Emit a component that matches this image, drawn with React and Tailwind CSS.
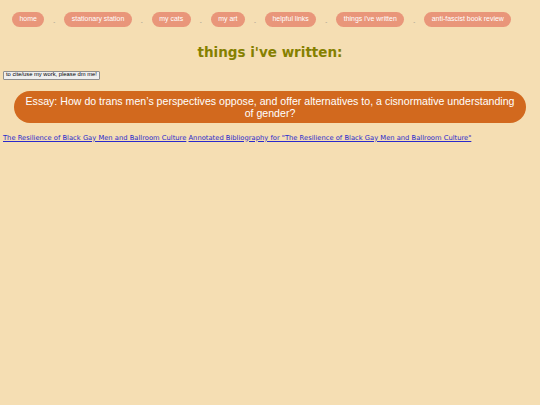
const navItems = [
  "home",
  "stationary station",
  "my cats",
  "my art",
  "helpful links",
  "things i've written",
  "anti-fascist book review",
];

export default function App() {
  return (
    <div className="min-h-[405px] w-full bg-[#f5deb3] font-['Liberation_Sans',Arial,sans-serif] leading-none">
      <nav className="flex items-center pl-3 pt-3">
        {navItems.map((item, i) => (
          <div key={item} className="flex items-center">
            {i > 0 && (
              <span className="w-5 pt-[5px] text-center text-[6px] leading-none text-[#8a8a8a]">-</span>
            )}
            <button className="h-[15px] rounded-[8px] bg-[#e9967a] px-[7.5px] text-[6.95px] leading-none text-white">
              {item}
            </button>
          </div>
        ))}
      </nav>

      <h1 className="mt-[19px] text-center font-['DejaVu_Sans',Verdana,sans-serif] text-[13.5px] font-bold leading-none text-[#858000]">
        things i've written:
      </h1>

      <div className="mt-[11px] flex pl-[3px]">
        <button className="h-[9px] rounded-[1px] border border-[#8f8f8f] bg-[#efefef] px-[2px] text-[5.8px] leading-none text-black">
          to cite/use my work, please dm me!
        </button>
      </div>

      <div className="mt-[11px] flex px-[14px]">
        <button className="w-full rounded-[16px] bg-[#d2691e] px-[10px] py-[4px] text-center text-[10.6px] leading-[12px] text-white">
          Essay: How do trans men’s perspectives oppose, and offer alternatives to, a cisnormative understanding of gender?
        </button>
      </div>

      <div className="mt-[12px] pl-[3px] font-['DejaVu_Sans',Verdana,sans-serif] text-[6.75px] leading-none text-[#2a2acc]">
        <a href="#" className="underline">The Resilience of Black Gay Men and Ballroom Culture</a>{" "}
        <a href="#" className="underline">Annotated Bibliography for "The Resilience of Black Gay Men and Ballroom Culture"</a>
      </div>
    </div>
  );
}
